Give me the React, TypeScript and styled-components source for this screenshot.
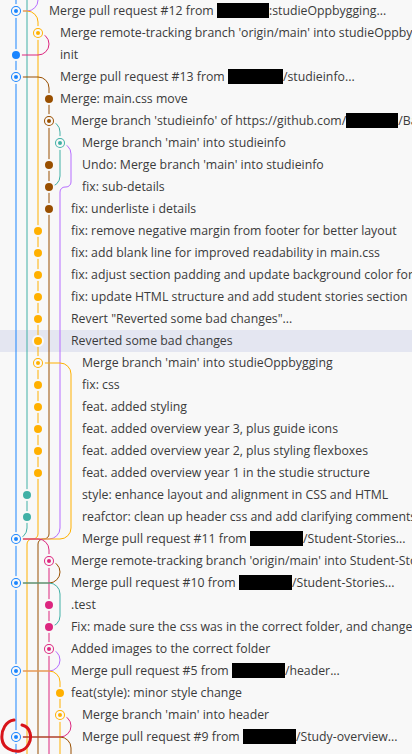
import React from 'react';
import styled, { createGlobalStyle } from 'styled-components';

const W = 11;
const H = 22;
const R = 5;
const CR = 4;
const BG = '#f8f8f8';

const C = {
  blue: '#1a85ff',
  yellow: '#ffb000',
  pink: '#dc267f',
  brown: '#994f00',
  teal: '#40b0a6',
  purple: '#b66dff',
};

type Part = string | { box: number };
type Commit = { id: string; parents: string[]; colors?: string[]; msg: Part[]; selected?: boolean };
type Lane = { id: string; color: string };
type RowModel = { commit: Commit; input: Lane[]; output: Lane[] };

const initialLanes: Lane[] = [
  { id: 'c0', color: C.blue },
  { id: 'c22', color: C.teal },
  { id: 'c0', color: C.purple },
];

const commits: Commit[] = [
  { id: 'c0', parents: ['c2', 'c1'], colors: [C.yellow], msg: ['Merge pull request #12 from ', { box: 52 }, ':studieOppbygging...'] },
  { id: 'c1', parents: ['c10', 'c2'], colors: [C.pink], msg: ["Merge remote-tracking branch 'origin/main' into studieOppbygging"] },
  { id: 'c2', parents: ['c3'], msg: ['init'] },
  { id: 'c3', parents: ['c24', 'c4'], colors: [C.brown], msg: ['Merge pull request #13 from ', { box: 55 }, '/studieinfo...'] },
  { id: 'c4', parents: ['c5'], msg: ['Merge: main.css move'] },
  { id: 'c5', parents: ['c7', 'c6'], colors: [C.teal], msg: ["Merge branch 'studieinfo' of https://github.com/", { box: 52 }, '/Bachelor'] },
  { id: 'c6', parents: ['c8', 'c24'], colors: [C.purple], msg: ["Merge branch 'main' into studieinfo"] },
  { id: 'c7', parents: ['c8'], msg: ["Undo: Merge branch 'main' into studieinfo"] },
  { id: 'c8', parents: ['c9'], msg: ['fix: sub-details'] },
  { id: 'c9', parents: ['bOld'], msg: ['fix: underliste i details'] },
  { id: 'c10', parents: ['c11'], msg: ['fix: remove negative margin from footer for better layout'] },
  { id: 'c11', parents: ['c12'], msg: ['fix: add blank line for improved readability in main.css'] },
  { id: 'c12', parents: ['c13'], msg: ['fix: adjust section padding and update background color for footer'] },
  { id: 'c13', parents: ['c14'], msg: ['fix: update HTML structure and add student stories section'] },
  { id: 'c14', parents: ['c15'], msg: ['Revert "Reverted some bad changes"...'] },
  { id: 'c15', parents: ['c16'], msg: ['Reverted some bad changes'], selected: true },
  { id: 'c16', parents: ['c17', 'c24'], colors: [C.yellow], msg: ["Merge branch 'main' into studieOppbygging"] },
  { id: 'c17', parents: ['c18'], msg: ['fix: css'] },
  { id: 'c18', parents: ['c19'], msg: ['feat. added styling'] },
  { id: 'c19', parents: ['c20'], msg: ['feat. added overview year 3, plus guide icons'] },
  { id: 'c20', parents: ['c21'], msg: ['feat. added overview year 2, plus styling flexboxes'] },
  { id: 'c21', parents: ['yOld'], msg: ['feat. added overview year 1 in the studie structure'] },
  { id: 'c22', parents: ['c23'], msg: ['style: enhance layout and alignment in CSS and HTML'] },
  { id: 'c23', parents: ['c24'], msg: ['reafctor: clean up header css and add clarifying comments'] },
  { id: 'c24', parents: ['c26', 'c25'], colors: [C.pink], msg: ['Merge pull request #11 from ', { box: 53 }, '/Student-Stories...'] },
  { id: 'c25', parents: ['c27', 'c26'], colors: [C.brown], msg: ["Merge remote-tracking branch 'origin/main' into Student-Stories"] },
  { id: 'c26', parents: ['c30', 'c28'], colors: [C.teal], msg: ['Merge pull request #10 from ', { box: 53 }, '/Student-Stories...'] },
  { id: 'c27', parents: ['c28'], msg: ['.test'] },
  { id: 'c28', parents: ['c29'], msg: ['Fix: made sure the css was in the correct folder, and changed the'] },
  { id: 'c29', parents: ['pOld', 'c30'], colors: [C.purple], msg: ['Added images to the correct folder'] },
  { id: 'c30', parents: ['c33', 'c31'], colors: [C.yellow], msg: ['Merge pull request #5 from ', { box: 53 }, '/header...'] },
  { id: 'c31', parents: ['c32'], msg: ['feat(style): minor style change'] },
  { id: 'c32', parents: ['hOld', 'c33'], colors: [C.pink], msg: ["Merge branch 'main' into header"] },
  { id: 'c33', parents: ['z0', 'z1'], colors: [C.brown], msg: ['Merge pull request #9 from ', { box: 53 }, '/Study-overview...'] },
];

function buildRows(): { rows: RowModel[]; tail: Lane[] } {
  let input = initialLanes;
  const rows: RowModel[] = [];
  for (const c of commits) {
    const output: Lane[] = [];
    let first = false;
    for (const n of input) {
      if (n.id === c.id) {
        if (!first) {
          output.push({ id: c.parents[0], color: n.color });
          first = true;
        }
        continue;
      }
      output.push({ ...n });
    }
    let ci = 0;
    c.parents.forEach((p, i) => {
      if (i === 0 && first) return;
      output.push({ id: p, color: (c.colors ?? [])[ci++] ?? C.blue });
    });
    rows.push({ commit: c, input, output });
    input = output;
  }
  return { rows, tail: input };
}

type Seg = { d: string; color: string };
type Dot = { r: number; color: string };

function graphFor(row: RowModel) {
  const { commit: c, input, output } = row;
  const inputIndex = input.findIndex((n) => n.id === c.id);
  const ci = inputIndex !== -1 ? inputIndex : input.length;
  const circleColor =
    ci < output.length ? output[ci].color : ci < input.length ? input[ci].color : C.blue;
  const segs: Seg[] = [];
  let oi = 0;
  for (let i = 0; i < input.length; i++) {
    const color = input[i].color;
    if (input[i].id === c.id) {
      if (i !== ci) {
        segs.push({ color, d: `M ${W * (i + 1)} 0 A ${W} ${W} 0 0 1 ${W * i} ${H / 2} H ${W * (ci + 1)}` });
      } else {
        oi++;
      }
    } else if (oi < output.length && input[i].id === output[oi].id) {
      if (i === oi) {
        segs.push({ color, d: `M ${W * (i + 1)} 0 V ${H}` });
      } else {
        segs.push({
          color,
          d: `M ${W * (i + 1)} 0 V 6 A ${R} ${R} 0 0 1 ${W * (i + 1) - R} ${H / 2} H ${W * (oi + 1) + R} A ${R} ${R} 0 0 0 ${W * (oi + 1)} ${H / 2 + R} V ${H}`,
        });
      }
      oi++;
    }
  }
  for (let p = 1; p < c.parents.length; p++) {
    let k = -1;
    output.forEach((n, idx) => {
      if (n.id === c.parents[p]) k = idx;
    });
    if (k === -1) continue;
    segs.push({
      color: output[k].color,
      d: `M ${W * k} ${H / 2} A ${W} ${W} 0 0 1 ${W * (k + 1)} ${H} M ${W * k} ${H / 2} H ${W * (ci + 1)}`,
    });
  }
  if (inputIndex !== -1) segs.push({ color: input[inputIndex].color, d: `M ${W * (ci + 1)} 0 V ${H / 2}` });
  if (c.parents.length > 0) segs.push({ color: circleColor, d: `M ${W * (ci + 1)} ${H / 2} V ${H}` });
  const dots: Dot[] =
    c.parents.length > 1
      ? [
          { r: CR + 2, color: circleColor },
          { r: CR - 1, color: circleColor },
        ]
      : [{ r: CR + 1, color: circleColor }];
  const lanes = Math.max(input.length, output.length, 1);
  return { segs, dots, cx: W * (ci + 1), width: W * (lanes + 1) };
}

const GlobalStyle = createGlobalStyle`
  html, body {
    margin: 0;
    padding: 0;
    background: ${BG};
    overflow: hidden;
  }
  #root {
    width: 412px;
    height: 754px;
    overflow: hidden;
  }
`;

const Panel = styled.div`
  position: relative;
  width: 412px;
  height: 754px;
  overflow: hidden;
  background: ${BG};
`;

const List = styled.div`
  display: flex;
  flex-direction: column;
`;

const Row = styled.div<{ $selected?: boolean }>`
  display: flex;
  align-items: center;
  height: 22px;
  padding-left: 5px;
  background: ${(p) => (p.$selected ? '#e4e6f1' : 'transparent')};
  flex: none;
`;

const Graph = styled.svg`
  display: block;
  flex: none;
  height: 22px;
  overflow: visible;

  path {
    fill: none;
    stroke-width: 1px;
  }
  circle {
    stroke: ${BG};
    stroke-width: 2px;
  }
`;

const Label = styled.div`
  flex: 1;
  min-width: 0;
  white-space: nowrap;
  overflow: hidden;
  font-family: 'Open Sans', 'Noto Sans', sans-serif;
  font-size: 12.3px;
  line-height: 22px;
  color: #3b3b3b;
`;

const Redacted = styled.span<{ $w: number }>`
  display: inline-block;
  width: ${(p) => p.$w}px;
  height: 15px;
  background: #000;
  vertical-align: -3px;
`;

const Annotation = styled.svg`
  position: absolute;
  left: 0;
  top: 712px;
  width: 40px;
  height: 42px;
  pointer-events: none;
`;

function GraphCell({ row }: { row: RowModel }) {
  const g = graphFor(row);
  return (
    <Graph width={g.width} height={H} viewBox={`0 0 ${g.width} ${H}`}>
      {g.segs.map((s, i) => (
        <path key={i} d={s.d} style={{ stroke: s.color }} />
      ))}
      {g.dots.map((d, i) => (
        <circle key={`c${i}`} cx={g.cx} cy={W} r={d.r} style={{ fill: d.color }} />
      ))}
    </Graph>
  );
}

function TailCell({ lanes }: { lanes: Lane[] }) {
  const width = W * (lanes.length + 1);
  return (
    <Graph width={width} height={H} viewBox={`0 0 ${width} ${H}`}>
      {lanes.map((l, i) => (
        <path key={i} d={`M ${W * (i + 1)} 0 V ${H}`} style={{ stroke: l.color }} />
      ))}
    </Graph>
  );
}

export default function App() {
  const { rows, tail } = buildRows();
  return (
    <Panel>
      <GlobalStyle />
      <List>
        {rows.map((row) => (
          <Row key={row.commit.id} $selected={row.commit.selected}>
            <GraphCell row={row} />
            <Label>
              {row.commit.msg.map((p, i) =>
                typeof p === 'string' ? <React.Fragment key={i}>{p}</React.Fragment> : <Redacted key={i} $w={p.box} />
              )}
            </Label>
          </Row>
        ))}
        <Row>
          <TailCell lanes={tail} />
        </Row>
      </List>
      <Annotation viewBox="0 712 40 42">
        <path
          d="M 14 720 C 6 721 1 730 2 739 C 3 748 12 752 20 751 C 28 749 32 740 30 733 C 29 728 26 726 22 725"
          fill="none"
          stroke="#d8141a"
          strokeWidth="3"
          strokeLinecap="round"
        />
      </Annotation>
    </Panel>
  );
}
